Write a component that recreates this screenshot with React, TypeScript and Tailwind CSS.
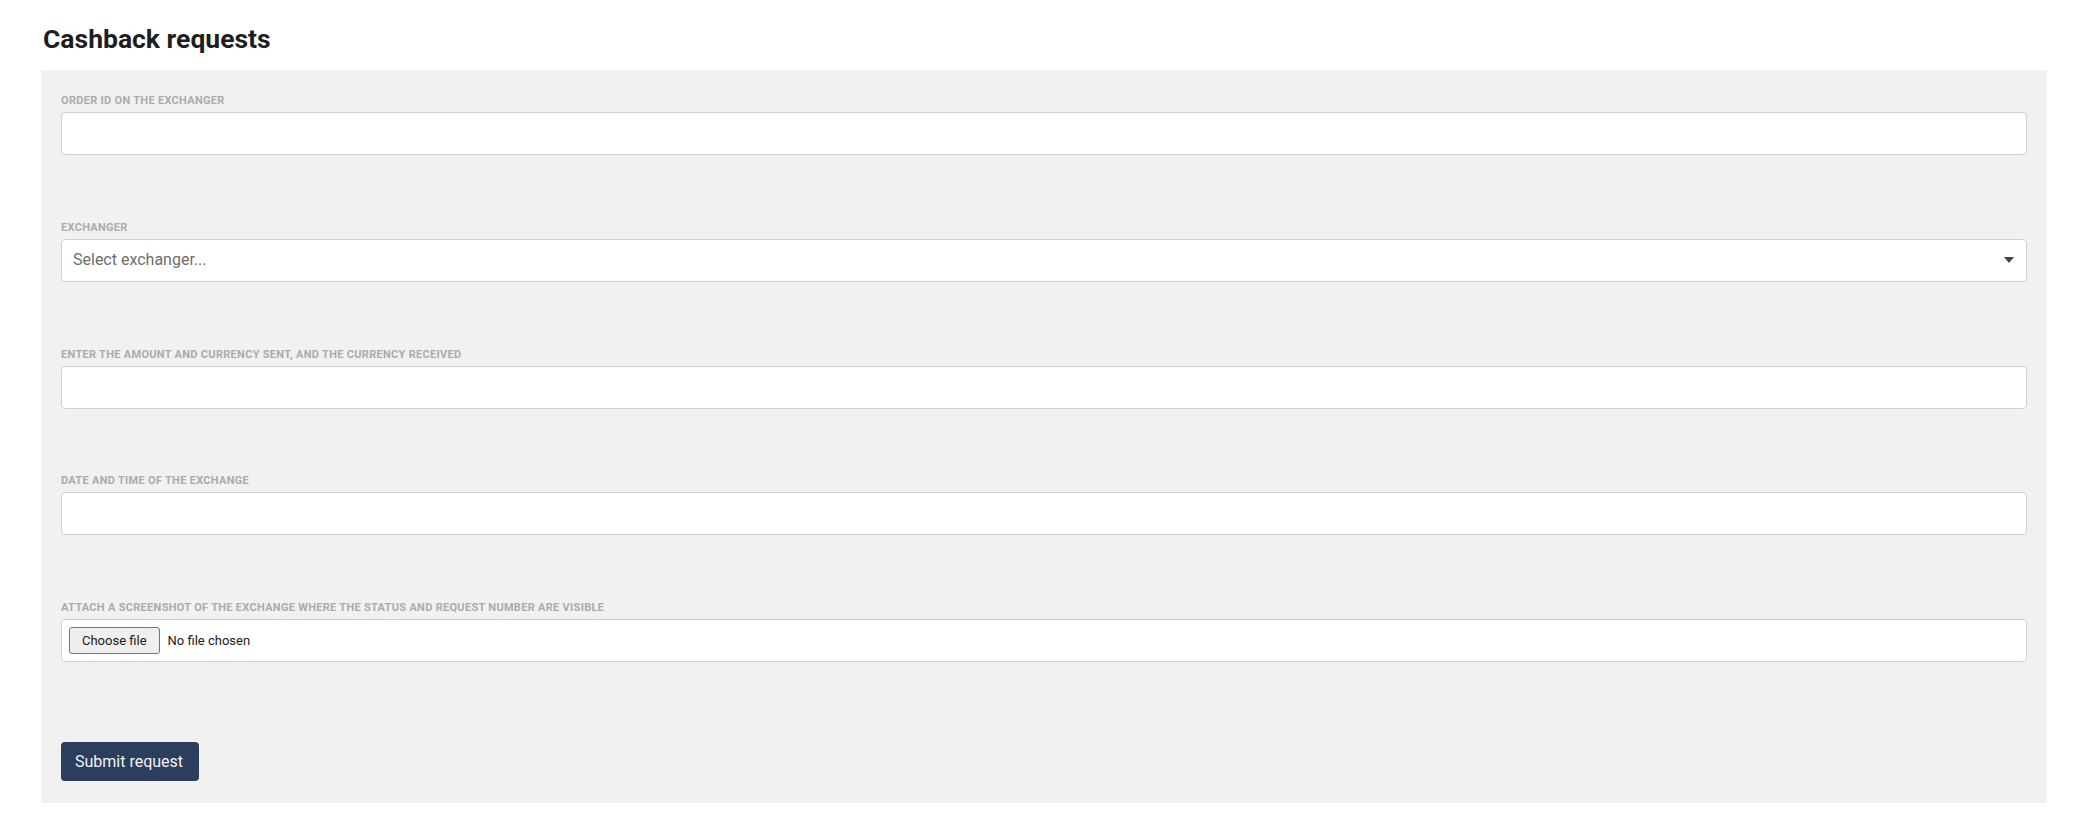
import { useState } from "react";

const labelClass =
  "block h-[15px] mb-[4px] text-[11px] leading-[15px] font-bold uppercase tracking-[0.3px] text-[#ababab]";

const boxClass = "block w-full h-[43px] rounded-[4px] border border-[#d0d0d0] bg-white px-[11px] text-[16px]";

function Field({ label, children }: { label: string; children: React.ReactNode }) {
  return (
    <div>
      <label className={labelClass}>{label}</label>
      {children}
    </div>
  );
}

export default function App() {
  const [orderId, setOrderId] = useState("");
  const [amount, setAmount] = useState("");
  const [date, setDate] = useState("");

  return (
    <div className="min-h-[826px] bg-white font-['Roboto',sans-serif]">
      <h1 className="pt-[23px] pl-[43px] mb-[15px] text-[26.5px] leading-[32px] font-bold text-[#1e1e1e]">
        Cashback requests
      </h1>

      <form
        className="ml-[41px] w-[2006px] bg-[#f1f1f1] pt-[23px] pb-[22px] px-[20px]"
        onSubmit={(e) => e.preventDefault()}
      >
        <div className="flex flex-col gap-[64.75px]">
          <Field label="Order ID on the exchanger">
            <input
              className={`${boxClass} text-[#333] outline-none`}
              value={orderId}
              onChange={(e) => setOrderId(e.target.value)}
            />
          </Field>

          <Field label="Exchanger">
            <div className="relative">
              <div className={`${boxClass} flex items-center text-[#6e6e6e]`}>Select exchanger...</div>
              <svg className="absolute right-[13px] top-[18px]" width="10" height="6" viewBox="0 0 10 6">
                <path d="M0 0h10L5 6z" fill="#444" />
              </svg>
            </div>
          </Field>

          <Field label="Enter the amount and currency sent, and the currency received">
            <input
              className={`${boxClass} text-[#333] outline-none`}
              value={amount}
              onChange={(e) => setAmount(e.target.value)}
            />
          </Field>

          <Field label="Date and time of the exchange">
            <input
              className={`${boxClass} text-[#333] outline-none`}
              value={date}
              onChange={(e) => setDate(e.target.value)}
            />
          </Field>

          <Field label="Attach a screenshot of the exchange where the status and request number are visible">
            <div className="flex h-[43px] items-center rounded-[4px] border border-[#d0d0d0] bg-white px-[7px]">
              <span className="flex h-[27px] items-center rounded-[3px] border border-[#767676] bg-[#efefef] px-[12px] text-[13px] text-[#1a1a1a]">
                Choose file
              </span>
              <span className="ml-[8px] text-[13px] text-[#1a1a1a]">No file chosen</span>
            </div>
          </Field>
        </div>

        <button
          type="submit"
          className="mt-[80px] h-[39px] w-[138px] rounded-[4px] bg-[#2b3e5e] pl-[14px] text-left text-[16px] text-[#f2f2f2]"
        >
          Submit request
        </button>
      </form>
    </div>
  );
}
